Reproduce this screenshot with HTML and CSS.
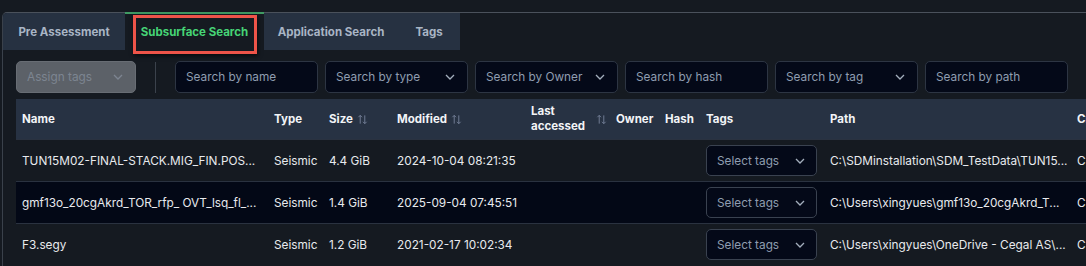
FILE: index.html
```html
<!DOCTYPE html>
<html lang="en">
<head>
  <meta charset="UTF-8" />
  <meta name="viewport" content="width=device-width, initial-scale=1.0"/>
  <title>Subsurface Search</title>
  <link rel="stylesheet" href="styles.css">
</head>
<body>
  <div class="panel">
    <div class="tabs">
      <div class="tab pre">Pre Assessment</div>
      <div class="tab active">Subsurface Search<span class="mark"></span></div>
      <div class="tab app">Application Search</div>
      <div class="tab tags">Tags</div>
    </div>

    <div class="content">
      <div class="toolbar">
        <div class="field select disabled">Assign tags <svg class="chev" viewBox="0 0 10 6"><path d="M1 1l4 4 4-4"/></svg></div>
        <div class="sep"></div>
        <div class="field">Search by name</div>
        <div class="field select">Search by type <svg class="chev" viewBox="0 0 10 6"><path d="M1 1l4 4 4-4"/></svg></div>
        <div class="field select">Search by Owner <svg class="chev" viewBox="0 0 10 6"><path d="M1 1l4 4 4-4"/></svg></div>
        <div class="field">Search by hash</div>
        <div class="field select">Search by tag <svg class="chev" viewBox="0 0 10 6"><path d="M1 1l4 4 4-4"/></svg></div>
        <div class="field">Search by path</div>
      </div>

      <table class="files">
        <colgroup>
          <col style="width:252px"><col style="width:55px"><col style="width:68px"><col style="width:134px">
          <col style="width:85px"><col style="width:49px"><col style="width:41px"><col style="width:124px">
          <col style="width:247px"><col style="width:120px">
        </colgroup>
        <thead>
          <tr>
            <th>Name</th>
            <th>Type</th>
            <th><span class="hd">Size <svg class="sort" viewBox="0 0 12 12"><path d="M3.5 10.5V1.5M1.5 3.5l2-2 2 2M8.5 1.5v9M6.5 8.5l2 2 2-2"/></svg></span></th>
            <th><span class="hd">Modified <svg class="sort" viewBox="0 0 12 12"><path d="M3.5 10.5V1.5M1.5 3.5l2-2 2 2M8.5 1.5v9M6.5 8.5l2 2 2-2"/></svg></span></th>
            <th><span class="hd wrap"><span>Last<br>accessed</span> <svg class="sort" viewBox="0 0 12 12"><path d="M3.5 10.5V1.5M1.5 3.5l2-2 2 2M8.5 1.5v9M6.5 8.5l2 2 2-2"/></svg></span></th>
            <th>Owner</th>
            <th>Hash</th>
            <th>Tags</th>
            <th>Path</th>
            <th>Created</th>
          </tr>
        </thead>
        <tbody>
          <tr>
            <td>TUN15M02-FINAL-STACK.MIG_FIN.POS...</td>
            <td>Seismic</td>
            <td>4.4 GiB</td>
            <td>2024-10-04 08:21:35</td>
            <td></td><td></td><td></td>
            <td><div class="tagsel">Select tags <svg class="chev" viewBox="0 0 10 6"><path d="M1 1l4 4 4-4"/></svg></div></td>
            <td>C:\SDMinstallation\SDM_TestData\TUN15...</td>
            <td>C:\SDMinstallation</td>
          </tr>
          <tr>
            <td>gmf13o_20cgAkrd_TOR_rfp_ OVT_lsq_fl_...</td>
            <td>Seismic</td>
            <td>1.4 GiB</td>
            <td>2025-09-04 07:45:51</td>
            <td></td><td></td><td></td>
            <td><div class="tagsel">Select tags <svg class="chev" viewBox="0 0 10 6"><path d="M1 1l4 4 4-4"/></svg></div></td>
            <td>C:\Users\xingyues\gmf13o_20cgAkrd_T...</td>
            <td>C:\Users</td>
          </tr>
          <tr>
            <td>F3.segy</td>
            <td>Seismic</td>
            <td>1.2 GiB</td>
            <td>2021-02-17 10:02:34</td>
            <td></td><td></td><td></td>
            <td><div class="tagsel">Select tags <svg class="chev" viewBox="0 0 10 6"><path d="M1 1l4 4 4-4"/></svg></div></td>
            <td>C:\Users\xingyues\OneDrive - Cegal AS\...</td>
            <td>C:\Users</td>
          </tr>
        </tbody>
      </table>
    </div>
  </div>
</body>
</html>
```

FILE: styles.css
```css
body {
  margin: 0;
  background-color: #151a21;
  font-family: Inter, "Noto Sans", sans-serif;
  font-size: 11.8px;
  color: #e8eaee;
  overflow: hidden;
  height: 266px;
}

.panel {
  margin: 12px 0 0 2px;
  border-top: 1px solid #4a515b;
  border-left: 1px solid #3a414b;
  border-top-left-radius: 5px;
  height: 260px;
}

.tabs {
  display: flex;
  height: 37px;
}

.tab {
  position: relative;
  display: flex;
  align-items: center;
  justify-content: center;
  background-color: #263141;
  color: #a9b5c5;
  font-weight: 700;
  font-size: 11.5px;
}

.tab.pre {
  width: 122px;
  border-top-left-radius: 4px;
}

.tab.app {
  width: 134px;
}

.tab.tags {
  width: 62px;
}

.tab.active {
  width: 139px;
  background-color: #151a21;
  color: #46d476;
  margin-top: -1px;
  border-top: 2px solid #3f9a63;
  height: 36px;
}

.tab .mark {
  position: absolute;
  left: 8px;
  right: 7px;
  top: 1px;
  bottom: -4px;
  border: 3px solid #ee5449;
  box-shadow: 1px 2px 4px rgba(0, 0, 0, 0.6);
}

.content {
  padding: 11px 0 0 13px;
}

.toolbar {
  display: flex;
  align-items: center;
  gap: 7px;
  height: 32px;
}

.field {
  box-sizing: border-box;
  display: flex;
  align-items: center;
  justify-content: space-between;
  width: 143px;
  height: 32px;
  padding: 0 12px 0 10px;
  background-color: #040918;
  border: 1px solid #2d3543;
  border-radius: 5px;
  color: #8f9db0;
  font-size: 11.8px;
}

.field.disabled {
  width: 120px;
  background-color: #5c6168;
  border-color: #686d74;
  color: #7d8591;
}

.sep {
  width: 1px;
  height: 31px;
  background-color: #3b424c;
  margin: 0 12px;
}

.chev {
  width: 10px;
  height: 6px;
  fill: none;
  stroke: #a4afbd;
  stroke-width: 1.3;
}

.disabled .chev {
  stroke: #7d8591;
}

.files {
  margin-top: 6px;
  border-collapse: collapse;
  table-layout: fixed;
  width: 1175px;
}

.files th,
.files td {
  padding: 0 6px;
  text-align: left;
  white-space: nowrap;
  overflow: hidden;
}

.files th {
  height: 40px;
  background-color: #273243;
  font-weight: 700;
  font-size: 11.5px;
  color: #f2f4f7;
}

.files td {
  height: 41px;
  border-top: 1px solid #2a3240;
}

.files tbody tr:nth-child(even) td {
  background-color: #030816;
}

.hd {
  display: inline-flex;
  align-items: center;
  gap: 4px;
}

.hd.wrap {
  gap: 11px;
  line-height: 15px;
}

.sort {
  width: 11px;
  height: 11px;
  fill: none;
  stroke: #76829a;
  stroke-width: 1;
}

.tagsel {
  box-sizing: border-box;
  display: flex;
  align-items: center;
  justify-content: space-between;
  width: 111px;
  height: 31px;
  padding: 0 11px 0 10px;
  background-color: #040918;
  border: 1px solid #3a4250;
  border-radius: 5px;
  color: #8f9db0;
}
```
